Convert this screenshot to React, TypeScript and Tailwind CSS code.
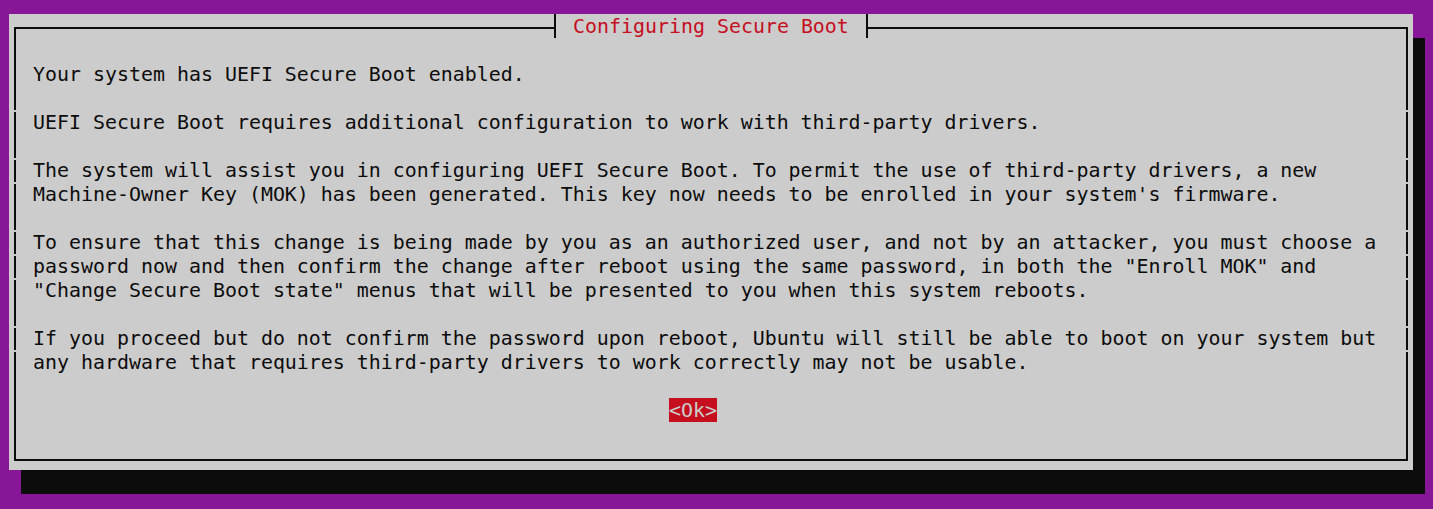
const LINES: string[] = [
  "",
  "Your system has UEFI Secure Boot enabled.",
  "",
  "UEFI Secure Boot requires additional configuration to work with third-party drivers.",
  "",
  "The system will assist you in configuring UEFI Secure Boot. To permit the use of third-party drivers, a new",
  "Machine-Owner Key (MOK) has been generated. This key now needs to be enrolled in your system's firmware.",
  "",
  "To ensure that this change is being made by you as an authorized user, and not by an attacker, you must choose a",
  'password now and then confirm the change after reboot using the same password, in both the "Enroll MOK" and',
  '"Change Secure Boot state" menus that will be presented to you when this system reboots.',
  "",
  "If you proceed but do not confirm the password upon reboot, Ubuntu will still be able to boot on your system but",
  "any hardware that requires third-party drivers to work correctly may not be usable.",
  "",
];

// rows (1-based from the first body row) where the terminal left a seam in the side lines
const SEAMS = new Set([4, 6, 7, 9, 10, 11, 13, 14]);

const Side = ({ seam }: { seam: boolean }) => (
  <div className="w-[12px] h-[24px] shrink-0">
    <div className={`ml-[5px] w-[2px] bg-[#0c0c0c] ${seam ? "mt-[2px] h-[22px]" : "h-[24px]"}`} />
  </div>
);

const BodyRow = ({ row, children }: { row: number; children: React.ReactNode }) => (
  <div className="flex h-[24px]">
    <Side seam={SEAMS.has(row)} />
    <div className="flex-1 pl-[12px] pt-[1px] h-[24px] whitespace-pre leading-[24px]">{children}</div>
    <Side seam={SEAMS.has(row)} />
  </div>
);

export default function App() {
  return (
    <div className="w-[1433px] h-[509px] bg-[#881798] pt-[14px] pl-[9px] overflow-hidden">
      <div
        className="w-[1404px] h-[456px] bg-[#cccccc] shadow-[12px_24px_0_0_#0c0c0c] text-[#0c0c0c] text-[19.93px] flex flex-col"
        style={{ fontFamily: '"DejaVu Sans Mono", "Liberation Mono", monospace' }}
      >
        {/* top border with title */}
        <div className="flex h-[24px]">
          <div className="w-[12px] shrink-0">
            <div className="ml-[5px] mt-[13px] w-[7px] h-[11px] border-l-2 border-t-2 border-[#0c0c0c]" />
          </div>
          <div className="w-[528px] h-[2px] mt-[13px] bg-[#0c0c0c]" />
          <div className="w-[12px] flex items-start">
            <div className="w-[5px] h-[2px] mt-[13px] bg-[#0c0c0c]" />
            <div className="w-[2px] h-[24px] bg-[#0c0c0c]" />
          </div>
          <div className="w-[300px] h-[24px] pt-[1px] whitespace-pre leading-[24px] text-[#c50f1f]"> Configuring Secure Boot </div>
          <div className="w-[12px] flex items-start">
            <div className="ml-[5px] w-[2px] h-[24px] bg-[#0c0c0c]" />
            <div className="w-[5px] h-[2px] mt-[13px] bg-[#0c0c0c]" />
          </div>
          <div className="w-[528px] h-[2px] mt-[13px] bg-[#0c0c0c]" />
          <div className="w-[12px] shrink-0">
            <div className="mt-[13px] w-[7px] h-[11px] border-r-2 border-t-2 border-[#0c0c0c]" />
          </div>
        </div>

        {LINES.map((line, i) => (
          <BodyRow key={i} row={i + 1}>
            {line}
          </BodyRow>
        ))}

        {/* button row */}
        <div className="flex h-[24px]">
          <Side seam={false} />
          <div className="flex-1 pl-[648px] h-[24px]">
            <button
              type="button"
              className="block w-[48px] h-[24px] pt-[1px] leading-[24px] whitespace-pre bg-[#c50f1f] text-[#cccccc]"
            >
              {"<Ok>"}
            </button>
          </div>
          <Side seam={false} />
        </div>
        <BodyRow row={17}>{""}</BodyRow>

        {/* bottom border */}
        <div className="flex h-[24px]">
          <div className="w-[12px] shrink-0">
            <div className="ml-[5px] w-[7px] h-[15px] border-l-2 border-b-2 border-[#0c0c0c]" />
          </div>
          <div className="flex-1 h-[2px] mt-[13px] bg-[#0c0c0c]" />
          <div className="w-[12px] shrink-0">
            <div className="w-[7px] h-[15px] border-r-2 border-b-2 border-[#0c0c0c]" />
          </div>
        </div>
      </div>
    </div>
  );
}
